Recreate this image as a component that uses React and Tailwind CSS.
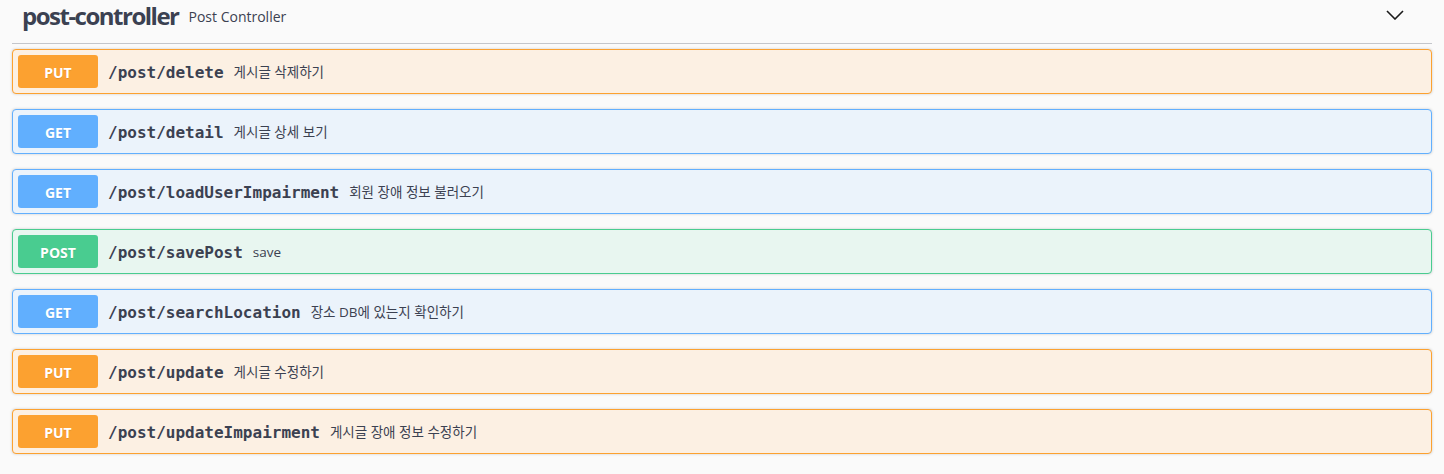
import React from 'react';

const methodStyles = {
  PUT: { row: 'bg-[#fcf0e3] border-[#fca130]', badge: 'bg-[#fca130]' },
  GET: { row: 'bg-[#ebf3fb] border-[#61affe]', badge: 'bg-[#61affe]' },
  POST: { row: 'bg-[#e8f6f0] border-[#49cc90]', badge: 'bg-[#49cc90]' },
};

const ops = [
  { method: 'PUT', path: '/post/delete', desc: '게시글 삭제하기' },
  { method: 'GET', path: '/post/detail', desc: '게시글 상세 보기' },
  { method: 'GET', path: '/post/loadUserImpairment', desc: '회원 장애 정보 불러오기' },
  { method: 'POST', path: '/post/savePost', desc: 'save' },
  { method: 'GET', path: '/post/searchLocation', desc: '장소 DB에 있는지 확인하기' },
  { method: 'PUT', path: '/post/update', desc: '게시글 수정하기' },
  { method: 'PUT', path: '/post/updateImpairment', desc: '게시글 장애 정보 수정하기' },
];

const sans = "font-['Open_Sans','Noto_Sans_CJK_KR',sans-serif]";

const App = () => {
  return (
    <div className={`min-h-[474px] bg-[#fafafa] px-[12px] text-[#3b4151] ${sans}`}>
      <div className="flex h-[44px] items-start border-b border-[#c4c6cb] pt-[4px] pl-[10px]">
        <h3 className="text-[24px] leading-6 font-bold tracking-[-1.5px] text-[#3b4151]">post-controller</h3>
        <span className="ml-[10px] text-[14px] leading-6 mt-[1px]">Post Controller</span>
        <svg className="ml-auto mr-[28px] mt-[6px]" width="18" height="10" viewBox="0 0 18 10" fill="none">
          <polyline points="1,1 9,9 17,1" stroke="#1a1a1a" strokeWidth="1.6" />
        </svg>
      </div>

      <div className="mt-[5px] flex flex-col gap-[15px]">
        {ops.map((op, index) => (
          <div
            key={index}
            className={`flex h-[45px] items-center rounded-[4px] border p-[5px] shadow-[0_0_3px_rgba(0,0,0,0.19)] ${methodStyles[op.method].row}`}
          >
            <span
              className={`flex h-[33px] w-[80px] items-center justify-center rounded-[3px] pt-[1px] text-[14px] font-bold text-white [text-shadow:0_1px_0_rgba(0,0,0,0.1)] ${methodStyles[op.method].badge}`}
            >
              {op.method}
            </span>
            <span className="px-[10px] pt-[3px] font-['DejaVu_Sans_Mono',monospace] text-[16px] font-semibold text-[#3b4151]">
              {op.path}
            </span>
            <span className="pt-[2px] text-[13.5px] text-[#3b4151]">{op.desc}</span>
          </div>
        ))}
      </div>
    </div>
  );
};

export default App;
